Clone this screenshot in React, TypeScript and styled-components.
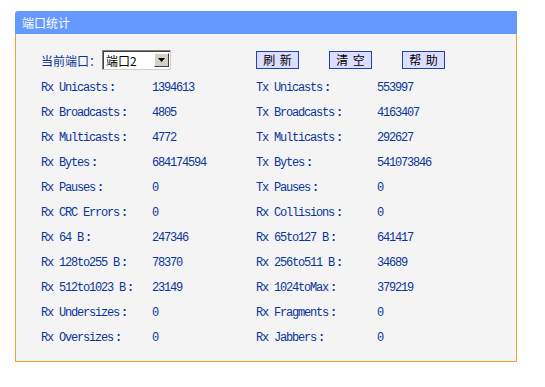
import React from 'react';
import styled, {createGlobalStyle} from 'styled-components';

const GlobalStyle = createGlobalStyle`
  html, body {
    margin: 0;
    padding: 0;
    background: #ffffff;
  }
  body {
    font-family: "Liberation Mono", "Noto Sans CJK SC", monospace;
  }
`;

interface IStatRow {
  rxLabel: string;
  rxValue: string;
  txLabel: string;
  txValue: string;
}

const ROWS: IStatRow[] = [
  {rxLabel: 'Rx Unicasts', rxValue: '1394613', txLabel: 'Tx Unicasts', txValue: '553997'},
  {rxLabel: 'Rx Broadcasts', rxValue: '4805', txLabel: 'Tx Broadcasts', txValue: '4163407'},
  {rxLabel: 'Rx Multicasts', rxValue: '4772', txLabel: 'Tx Multicasts', txValue: '292627'},
  {rxLabel: 'Rx Bytes', rxValue: '684174594', txLabel: 'Tx Bytes', txValue: '541073846'},
  {rxLabel: 'Rx Pauses', rxValue: '0', txLabel: 'Tx Pauses', txValue: '0'},
  {rxLabel: 'Rx CRC Errors', rxValue: '0', txLabel: 'Rx Collisions', txValue: '0'},
  {rxLabel: 'Rx 64 B', rxValue: '247346', txLabel: 'Rx 65to127 B', txValue: '641417'},
  {rxLabel: 'Rx 128to255 B', rxValue: '78370', txLabel: 'Rx 256to511 B', txValue: '34689'},
  {rxLabel: 'Rx 512to1023 B', rxValue: '23149', txLabel: 'Rx 1024toMax', txValue: '379219'},
  {rxLabel: 'Rx Undersizes', rxValue: '0', txLabel: 'Rx Fragments', txValue: '0'},
  {rxLabel: 'Rx Oversizes', rxValue: '0', txLabel: 'Rx Jabbers', txValue: '0'}
];

const Page = styled.div`
  padding: 11px 0 0 15px;
`;

const Panel = styled.section`
  width: 502px;
`;

const PanelHeader = styled.div`
  height: 23px;
  line-height: 23px;
  padding-left: 7px;
  background: #6699ff;
  border-top-left-radius: 3px;
  color: #ffffff;
  font-family: "Noto Sans CJK SC", sans-serif;
  font-size: 12px;
`;

const PanelBody = styled.div`
  background: #f4f4f4;
  border: 1px solid #ff9933;
  border-top: none;
  padding: 16px 0 10px 25px;
`;

const Grid = styled.div`
  display: grid;
  grid-template-columns: 111px 104px 121px 1fr;
  color: #0a3599;
  font-size: 12px;
  letter-spacing: -1.2px;
`;

const Toolbar = styled(Grid)`
  height: 20px;
  align-items: center;
  margin-bottom: 6px;
`;

const PortPicker = styled.div`
  grid-column: 1 / 3;
  display: flex;
  align-items: center;
  font-family: "Noto Sans CJK SC", sans-serif;
  font-size: 12px;
  letter-spacing: 0;
`;

const Select = styled.div`
  display: flex;
  align-items: center;
  box-sizing: border-box;
  width: 69px;
  height: 20px;
  margin-left: 1px;
  background: #ffffff;
  border: 1px solid #808080;
  border-right-color: #d4d0c8;
  border-bottom-color: #d4d0c8;
  box-shadow: inset 1px 1px 0 #404040;
  color: #000000;
`;

const SelectText = styled.span`
  flex: 1;
  padding-left: 3px;
  font-size: 12px;
  font-family: "Noto Sans CJK SC", sans-serif;
`;

const SelectArrow = styled.span`
  display: flex;
  align-items: center;
  justify-content: center;
  width: 15px;
  height: 14px;
  margin-right: 1px;
  background: #d4d0c8;
  border: 1px solid #ffffff;
  border-right-color: #404040;
  border-bottom-color: #404040;
  box-sizing: border-box;
`;

const Buttons = styled.div`
  grid-column: 3 / 5;
  display: flex;
  gap: 30px;
`;

const Button = styled.button`
  box-sizing: border-box;
  width: 43px;
  height: 18px;
  padding: 0;
  background: #ddddff;
  border: 1px solid #1d43b3;
  color: #000000;
  font-family: "Noto Sans CJK SC", sans-serif;
  font-size: 12px;
  line-height: 16px;
  letter-spacing: 0;
  word-spacing: 2px;
  cursor: pointer;
`;

const Cell = styled.div`
  height: 25px;
  line-height: 25px;
  white-space: nowrap;
`;

const Colon = styled.span`
  display: inline-block;
  width: 12px;
  padding-left: 2px;
  box-sizing: border-box;
  font-weight: 700;
  letter-spacing: 0;
`;

const App = () => {
  return (
    <Page>
      <GlobalStyle />
      <Panel>
        <PanelHeader>端口统计</PanelHeader>
        <PanelBody>
          <Toolbar>
            <PortPicker>
              当前端口：
              <Select>
                <SelectText>端口2</SelectText>
                <SelectArrow>
                  <svg width="7" height="4" viewBox="0 0 7 4">
                    <path d="M0 0h7L3.5 4z" fill="#000" />
                  </svg>
                </SelectArrow>
              </Select>
            </PortPicker>
            <Buttons>
              <Button>刷 新</Button>
              <Button>清 空</Button>
              <Button>帮 助</Button>
            </Buttons>
          </Toolbar>
          <Grid>
            {ROWS.map((row: IStatRow) => (
              <React.Fragment key={row.rxLabel}>
                <Cell>
                  {row.rxLabel}
                  <Colon>:</Colon>
                </Cell>
                <Cell>{row.rxValue}</Cell>
                <Cell>
                  {row.txLabel}
                  <Colon>:</Colon>
                </Cell>
                <Cell>{row.txValue}</Cell>
              </React.Fragment>
            ))}
          </Grid>
        </PanelBody>
      </Panel>
    </Page>
  );
};

export default App;
